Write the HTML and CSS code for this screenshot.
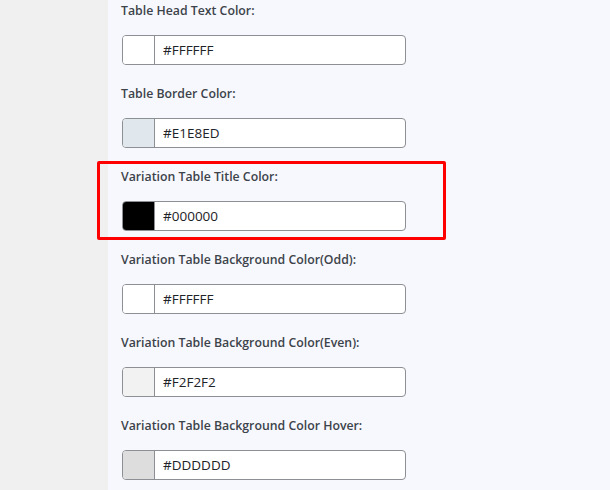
FILE: index.html
```html
<!DOCTYPE html>
<html lang="en">
<head>
    <meta charset="UTF-8">
    <title>Table Colors</title>
    <link rel="stylesheet" href="styles.css">
</head>
<body>
    <div class="sidebar"></div>
    <div class="main">
        <div class="field">
            <label>Table Head Text Color:</label>
            <div class="color-input">
                <span class="swatch" style="background:#FFFFFF"></span>
                <input type="text" value="#FFFFFF">
            </div>
        </div>
        <div class="field">
            <label>Table Border Color:</label>
            <div class="color-input">
                <span class="swatch" style="background:#E1E8ED"></span>
                <input type="text" value="#E1E8ED">
            </div>
        </div>
        <div class="field highlighted">
            <span class="highlight"></span>
            <label>Variation Table Title Color:</label>
            <div class="color-input">
                <span class="swatch" style="background:#000000"></span>
                <input type="text" value="#000000">
            </div>
        </div>
        <div class="field">
            <label>Variation Table Background Color(Odd):</label>
            <div class="color-input">
                <span class="swatch" style="background:#FFFFFF"></span>
                <input type="text" value="#FFFFFF">
            </div>
        </div>
        <div class="field">
            <label>Variation Table Background Color(Even):</label>
            <div class="color-input">
                <span class="swatch" style="background:#F2F2F2"></span>
                <input type="text" value="#F2F2F2">
            </div>
        </div>
        <div class="field">
            <label>Variation Table Background Color Hover:</label>
            <div class="color-input">
                <span class="swatch" style="background:#DDDDDD"></span>
                <input type="text" value="#DDDDDD">
            </div>
        </div>
    </div>
</body>
</html>
```

FILE: styles.css
```css
html, body {
    height: 100%;
}
body {
    margin: 0;
    display: flex;
    font-family: "Open Sans", "Noto Sans", sans-serif;
    background-color: #f7f8fd;
    overflow: hidden;
}
.sidebar {
    width: 108px;
    flex-shrink: 0;
    background-color: #f0f0f1;
}
.main {
    flex: 1;
    padding: 2px 0 0 13px;
}
.field {
    position: relative;
    width: 285px;
    margin-bottom: 20px;
}
label {
    display: block;
    font-size: 12.3px;
    line-height: 18px;
    font-weight: 600;
    color: #3c434a;
    margin-bottom: 15px;
}
.color-input {
    display: flex;
    width: 284px;
    height: 30px;
    margin-left: 1px;
    box-sizing: border-box;
    border: 1px solid #8c8f94;
    border-radius: 4px;
    overflow: hidden;
    background-color: #fff;
}
.swatch {
    width: 31px;
    flex-shrink: 0;
    border-right: 1px solid #8c8f94;
}
.color-input input {
    flex: 1;
    min-width: 0;
    border: none;
    outline: none;
    padding: 0 0 0 8px;
    font-family: "Open Sans", "Noto Sans", sans-serif;
    font-size: 13.5px;
    color: #1d2327;
    background: transparent;
}
.highlight {
    position: absolute;
    top: -7px;
    left: -24px;
    width: 349px;
    height: 79px;
    box-sizing: border-box;
    border: 3px solid #ff0000;
    border-radius: 2px;
    pointer-events: none;
}
```
